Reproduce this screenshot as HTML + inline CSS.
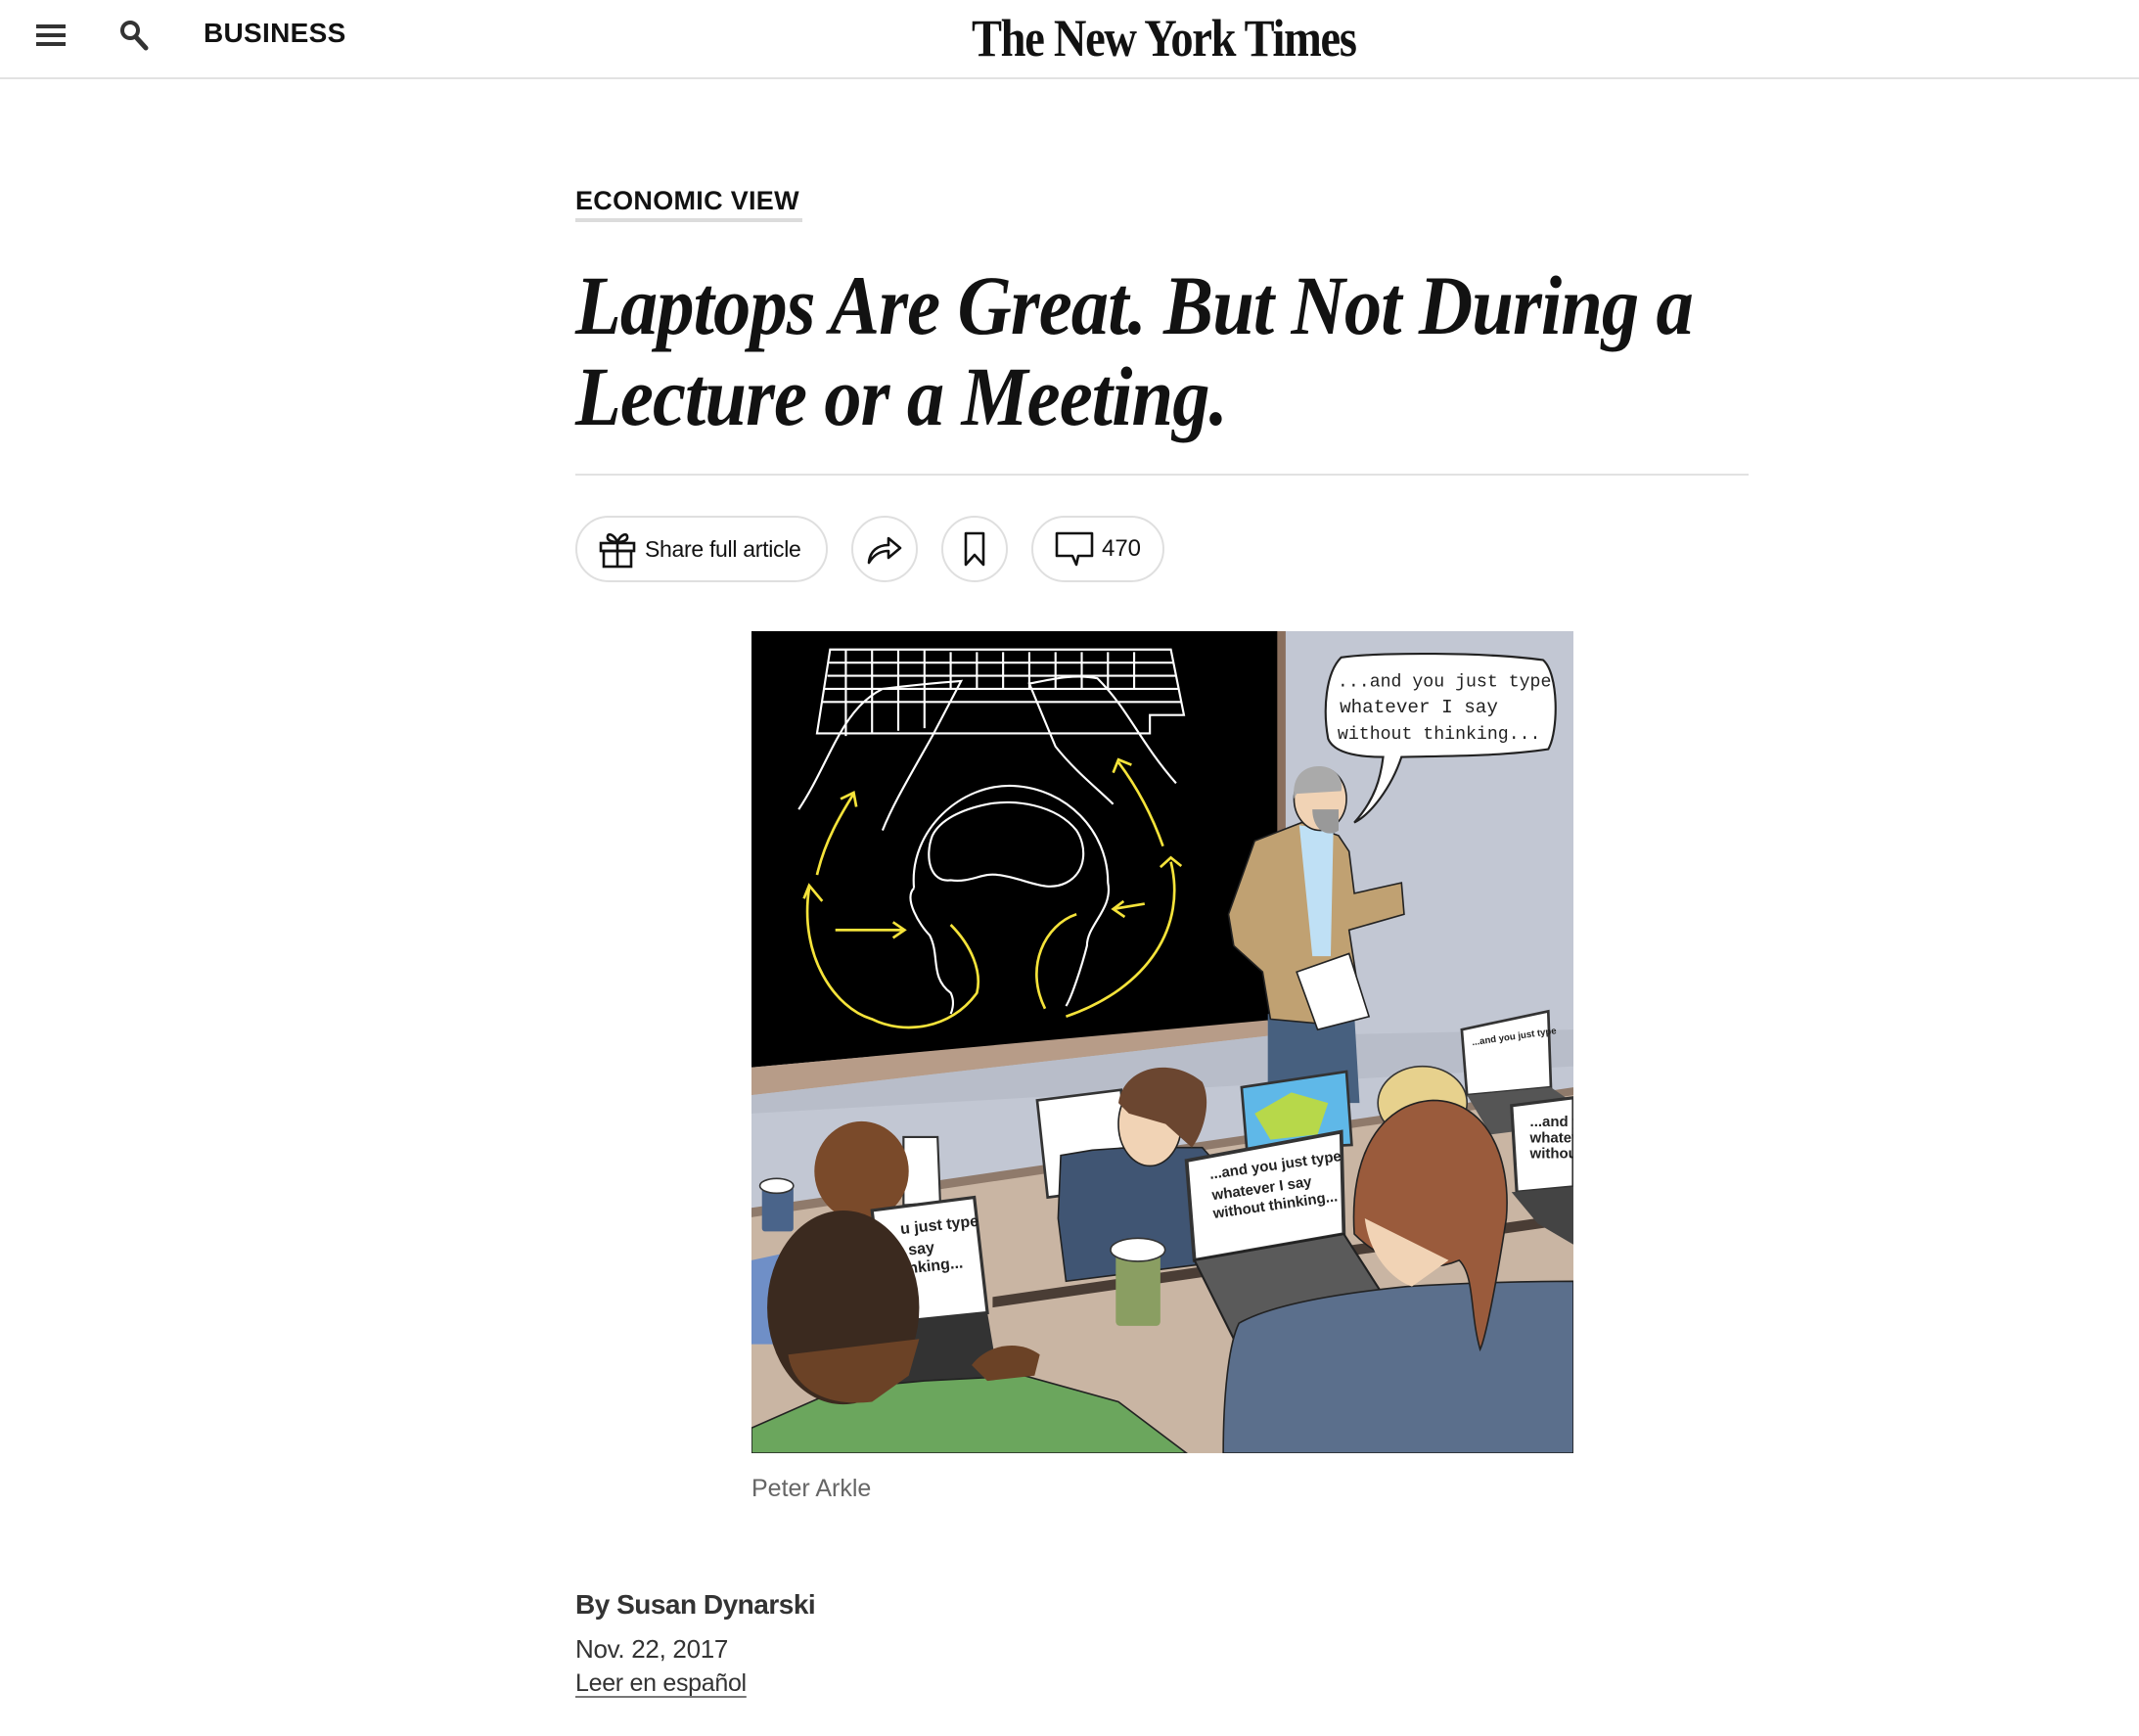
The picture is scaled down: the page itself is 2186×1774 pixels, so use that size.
<!DOCTYPE html>
<html><head><meta charset="utf-8"><style>
*{margin:0;padding:0;box-sizing:border-box}
body{width:2186px;height:1774px;background:#fff;position:relative;overflow:hidden;font-family:"Liberation Sans",sans-serif;color:#121212}
.abs{position:absolute}
.hdr{left:0;top:0;width:2186px;height:81px;border-bottom:2px solid #e2e2e2}
.btn{position:absolute;top:527px;height:68px;border:2px solid #dfdfdf;border-radius:34px;display:flex;align-items:center;justify-content:center}
.hl{left:588px;font-family:"Liberation Serif",serif;font-weight:bold;font-style:italic;font-size:86px;white-space:nowrap;transform-origin:left top;letter-spacing:-1px}
</style></head><body>
<div class="abs hdr"></div>
<svg class="abs" style="left:37px;top:24px" width="30" height="24" viewBox="0 0 30 24"><rect y="1" width="30" height="4" fill="#333"/><rect y="10" width="30" height="4" fill="#333"/><rect y="19" width="30" height="4" fill="#333"/></svg>
<svg class="abs" style="left:122px;top:20px" width="30" height="32" viewBox="0 0 30 32"><circle cx="11" cy="11" r="8" fill="none" stroke="#333" stroke-width="4"/><path d="M17 18 L27 29" stroke="#333" stroke-width="5" stroke-linecap="round"/></svg>
<div class="abs" style="left:208px;top:18px;font-size:28px;font-weight:bold;letter-spacing:0.3px">BUSINESS</div>
<div class="abs" style="left:993px;top:8px;font-family:'Liberation Serif',serif;font-weight:bold;font-size:54px;letter-spacing:-1.5px;white-space:nowrap;transform:scaleX(0.86);transform-origin:left top">The New York Times</div>

<div class="abs" style="left:588px;top:190px;font-size:27px;font-weight:bold;letter-spacing:0.3px">ECONOMIC VIEW</div>
<div class="abs" style="left:588px;top:223px;width:232px;height:4px;background:#dcdcdc"></div>

<div class="abs hl" style="top:262px;transform:scaleX(0.89)">Laptops Are Great. But Not During a</div>
<div class="abs hl" style="top:355px;transform:scaleX(0.89)">Lecture or a Meeting.</div>
<div class="abs" style="left:588px;top:484px;width:1199px;height:2px;background:#e2e2e2"></div>

<div class="btn" style="left:588px;width:258px;justify-content:flex-start;padding-left:22px">
<svg width="38" height="40" viewBox="0 0 38 40" fill="none" stroke="#121212" stroke-width="2.6"><rect x="2" y="14" width="34" height="8"/><rect x="5" y="22" width="28" height="16"/><path d="M19 14V38"/><path d="M19 13C15 4 8 3 9 9C10 13 19 13 19 13C19 13 28 13 29 9C30 3 23 4 19 13Z"/></svg>
<span style="font-size:23px;margin-left:9px;letter-spacing:-0.3px">Share full article</span></div>
<div class="btn" style="left:870px;width:68px">
<svg width="38" height="32" viewBox="0 0 38 32" fill="none" stroke="#121212" stroke-width="2.6" stroke-linejoin="round"><path d="M3 30C4 18 12 12 23 12V5L35 15L23 25V18C14 18 8 22 3 30Z"/></svg></div>
<div class="btn" style="left:962px;width:68px">
<svg width="24" height="36" viewBox="0 0 24 36" fill="none" stroke="#121212" stroke-width="2.6" stroke-linejoin="round"><path d="M3 2H21V34L12 24L3 34Z"/></svg></div>
<div class="btn" style="left:1054px;width:136px">
<svg width="40" height="38" viewBox="0 0 40 38" fill="none" stroke="#121212" stroke-width="2.6" stroke-linejoin="round"><path d="M2 3H38V26H24L22 35L18 26H2Z"/></svg>
<span style="font-size:24px;margin-left:8px">470</span></div>

<svg class="abs" style="left:768px;top:645px" width="840" height="840" viewBox="0 0 1568 1568">
<rect width="1568" height="1568" fill="#c2c7d3"/>
<polygon points="0,0 1005,0 1005,742 0,832" fill="#000"/>
<rect x="1003" y="0" width="16" height="750" fill="#8a6f5d"/>
<polygon points="0,832 985,742 985,772 0,885" fill="#b79c88"/>
<polygon points="0,885 985,772 1568,760 1568,830 0,920" fill="#b8bdc9"/>
<g fill="none" stroke="#fff" stroke-width="4">
<path d="M150 35H800L825 160H760V195H125Z"/>
<path d="M148 60H805M145 85H810M140 110H815M135 135H820"/>
<path d="M180 35V200M230 35V195M280 35V190M330 35V185M380 40V110M430 40V110M480 40V110M530 40V110M580 40V110M630 40V110M680 40V110M730 40V110"/>
<path d="M90 340C150 250 170 150 250 110C330 100 400 95 400 95L345 200C300 280 270 330 250 380"/>
<path d="M810 290C740 210 720 150 660 90C610 80 560 95 530 100L580 220C620 270 660 300 690 330"/>
<path d="M310 490C300 380 400 290 500 295C600 300 680 380 680 480C690 530 640 560 640 600C630 640 610 700 600 715"/>
<path d="M310 490C290 510 320 560 340 580C360 620 340 660 380 690C390 710 380 730 380 730"/>
<path d="M345 390C330 430 340 480 380 475C420 480 440 460 470 465C520 470 560 500 600 480C640 460 640 410 620 380C580 330 500 320 450 330C400 340 360 360 345 390Z"/>
</g>
<g fill="none" stroke="#f5e33a" stroke-width="5">
<path d="M125 465C140 400 170 350 195 310"/><path d="M170 320L195 308L200 335"/>
<path d="M110 490C90 620 160 720 230 740C290 770 380 760 430 690C440 650 420 600 380 560"/>
<path d="M100 510L110 485L135 515"/>
<path d="M160 570H290"/><path d="M270 555L292 570L270 585"/>
<path d="M785 410C760 340 730 290 700 250"/><path d="M690 270L700 245L725 255"/>
<path d="M800 440C830 560 760 680 600 735"/><path d="M780 450L800 432L820 448"/>
<path d="M560 720C520 640 560 560 620 540"/>
<path d="M750 520L690 530"/><path d="M710 515L690 530L712 545"/>
</g>
<path d="M1125 50C1200 40 1400 40 1510 55C1540 80 1540 190 1520 225C1420 240 1300 238 1240 240C1220 300 1180 350 1150 365C1190 320 1200 280 1205 240C1150 240 1110 230 1100 205C1090 150 1095 80 1125 50Z" fill="#fff" stroke="#222" stroke-width="4"/>
<text x="1118" y="105" font-family="Liberation Mono,monospace" font-size="34" fill="#222">...and you just type</text>
<text x="1122" y="155" font-family="Liberation Mono,monospace" font-size="36" fill="#222">whatever I  say</text>
<text x="1118" y="205" font-family="Liberation Mono,monospace" font-size="34" fill="#222">without thinking...</text>
<polygon points="985,730 1150,730 1160,900 985,900" fill="#47607f"/>
<polygon points="960,400 1050,365 1120,390 1140,420 1150,500 1240,480 1245,540 1140,570 1160,700 1100,750 990,740 975,650 920,600 910,540" fill="#c0a172" stroke="#222" stroke-width="3"/>
<polygon points="1045,370 1110,380 1105,620 1070,620" fill="#bfe0f5"/>
<ellipse cx="1085" cy="320" rx="50" ry="60" fill="#f1d3b5" stroke="#222" stroke-width="3"/>
<path d="M1035 320C1030 270 1060 255 1090 258C1120 262 1130 290 1125 305L1040 310Z" fill="#aaa"/>
<path d="M1070 340C1070 380 1100 395 1120 380V340Z" fill="#999"/>
<polygon points="1040,650 1140,615 1178,735 1080,760" fill="#fff" stroke="#222" stroke-width="3"/>
<polygon points="0,1110 1568,880 1568,1568 0,1568" fill="#c9b5a3"/>
<polygon points="0,1100 1568,870 1568,885 0,1118" fill="#8f7a6b"/>
<polygon points="460,1270 1568,1110 1568,1130 460,1290" fill="#4a3d35"/>
<polygon points="545,895 705,875 720,1060 565,1080" fill="#fff" stroke="#333" stroke-width="5"/>
<polygon points="935,870 1135,840 1145,980 945,990" fill="#5fb8e8" stroke="#333" stroke-width="5"/>
<polygon points="960,920 1030,880 1100,900 1080,960 990,970" fill="#b7d84a"/>
<polygon points="1355,760 1520,725 1525,870 1365,885" fill="#fff" stroke="#333" stroke-width="5"/>
<text x="1375" y="790" font-size="18" font-weight="bold" fill="#222" transform="rotate(-8 1375 790)">...and you just type</text>
<polygon points="1365,885 1525,870 1568,900 1568,940 1410,960" fill="#555"/>
<polygon points="290,965 355,965 360,1090 290,1095" fill="#fff" stroke="#333" stroke-width="4"/>
<ellipse cx="1280" cy="900" rx="85" ry="70" fill="#e7d18d" stroke="#333" stroke-width="3"/>
<polygon points="590,1000 650,990 720,985 860,985 900,1030 920,1200 600,1240 585,1120" fill="#405573" stroke="#222" stroke-width="3"/>
<ellipse cx="760" cy="940" rx="60" ry="80" fill="#f1d3b5" stroke="#222" stroke-width="3"/>
<path d="M700 900C710 830 800 810 860 860C880 900 860 960 840 985L790 940L720 920Z" fill="#6b4630"/>
<ellipse cx="210" cy="1030" rx="90" ry="95" fill="#7a4a2a"/>
<path d="M0 1200L140 1170L300 1200L330 1360H0Z" fill="#6f8fc7"/>
<rect x="20" y="1060" width="60" height="85" rx="6" fill="#4a648a"/>
<ellipse cx="48" cy="1058" rx="32" ry="14" fill="#fff" stroke="#333" stroke-width="3"/>
<polygon points="230,1105 425,1080 450,1300 255,1320" fill="#fff" stroke="#333" stroke-width="6"/>
<text x="285" y="1150" font-size="30" font-weight="bold" fill="#222" transform="rotate(-6 285 1150)">u just type</text>
<text x="300" y="1190" font-size="30" font-weight="bold" fill="#222" transform="rotate(-6 300 1190)">say</text>
<text x="300" y="1225" font-size="30" font-weight="bold" fill="#222" transform="rotate(-6 300 1225)">nking...</text>
<polygon points="255,1320 450,1300 470,1420 280,1440" fill="#333"/>
<polygon points="830,1010 1125,955 1130,1150 845,1200" fill="#fff" stroke="#333" stroke-width="7"/>
<text x="875" y="1045" font-size="28" font-weight="bold" fill="#222" transform="rotate(-8 875 1045)">...and you just type</text>
<text x="880" y="1085" font-size="28" font-weight="bold" fill="#222" transform="rotate(-8 880 1085)">whatever I say</text>
<text x="882" y="1120" font-size="28" font-weight="bold" fill="#222" transform="rotate(-8 882 1120)">without thinking...</text>
<polygon points="845,1200 1130,1150 1220,1290 920,1350" fill="#5a5a5a" stroke="#222" stroke-width="4"/>
<polygon points="1450,905 1568,890 1568,1060 1460,1070" fill="#fff" stroke="#333" stroke-width="6"/>
<text x="1485" y="945" font-size="28" font-weight="bold" fill="#222">...and yo</text>
<text x="1485" y="975" font-size="28" font-weight="bold" fill="#222">whateve</text>
<text x="1485" y="1005" font-size="28" font-weight="bold" fill="#222">without</text>
<polygon points="1450,1070 1568,1060 1568,1170 1500,1130" fill="#444"/>
<rect x="695" y="1180" width="85" height="145" rx="8" fill="#8a9e62"/>
<ellipse cx="737" cy="1180" rx="52" ry="22" fill="#fff" stroke="#333" stroke-width="3"/>
<path d="M900 1568C900 1460 910 1360 930 1320C1000 1280 1150 1260 1250 1250C1400 1240 1568 1240 1568 1240V1568Z" fill="#5b6f8c" stroke="#222" stroke-width="3"/>
<path d="M1150 1150C1140 1000 1200 900 1300 895C1400 895 1450 1000 1440 1120C1420 1250 1400 1350 1390 1370C1370 1300 1380 1230 1350 1200C1280 1230 1200 1200 1150 1150Z" fill="#9a5b3c" stroke="#222" stroke-width="3"/>
<path d="M1170 1120C1180 1200 1230 1240 1260 1250L1330 1200Z" fill="#f1d3b5"/>
<path d="M0 1520L170 1445L330 1430L520 1420L700 1470L830 1568H0Z" fill="#6ba65d" stroke="#222" stroke-width="3"/>
<ellipse cx="175" cy="1290" rx="145" ry="185" fill="#3b2a1f"/>
<path d="M70 1380C80 1450 150 1480 230 1470L300 1420L320 1350Z" fill="#6b4226"/>
<path d="M420 1400C450 1360 510 1350 550 1380L540 1420L450 1430Z" fill="#6b4226"/>
</svg>

<div class="abs" style="left:768px;top:1507px;font-size:25px;color:#666">Peter Arkle</div>
<div class="abs" style="left:588px;top:1624px;font-size:28px;font-weight:bold;color:#333;letter-spacing:-0.5px">By Susan Dynarski</div>
<div class="abs" style="left:588px;top:1670px;font-size:26px;color:#333;letter-spacing:-0.3px">Nov. 22, 2017</div>
<div class="abs" style="left:588px;top:1706px;font-size:25px;color:#333;text-decoration:underline;text-decoration-color:#777;text-underline-offset:5px;letter-spacing:-0.3px">Leer en español</div>
</body></html>
